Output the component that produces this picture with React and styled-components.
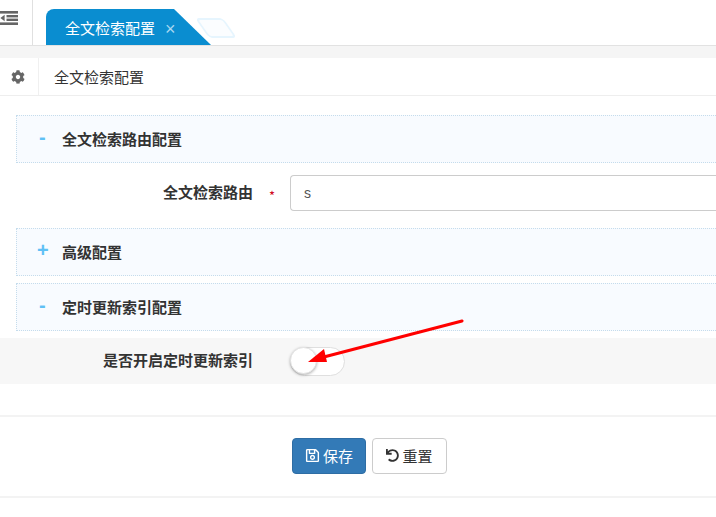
import React from "react";
import styled, { createGlobalStyle } from "styled-components";
import { FaCog, FaRegSave, FaUndo } from "react-icons/fa";

const GlobalStyle = createGlobalStyle`
  html, body {
    margin: 0;
    padding: 0;
    background: #fff;
    overflow: hidden;
  }
  body {
    font-family: "Noto Sans CJK SC", "Liberation Sans", sans-serif;
    font-size: 15px;
    color: #333;
  }
  * {
    box-sizing: border-box;
  }
`;

const SECTION_ICON = { open: "-", closed: "+" };

const App = () => {
  return (
    <Page>
      <GlobalStyle />
      <TopBar>
        <MenuToggle>
          <svg width="18" height="14" viewBox="0 0 18 14" fill="#666">
            <rect x="0" y="0" width="18" height="2.6" />
            <rect x="6.5" y="4" width="11.5" height="2.4" />
            <rect x="6.5" y="7.6" width="11.5" height="2.4" />
            <rect x="0" y="11.4" width="18" height="2.6" />
            <path d="M4.6 3.8v6.4L0.4 7z" />
          </svg>
        </MenuToggle>
        <Tab>
          全文检索配置
          <TabClose>×</TabClose>
        </Tab>
        <GhostTab />
      </TopBar>
      <Band />
      <Breadcrumb>
        <CrumbIcon>
          <FaCog size={14} />
        </CrumbIcon>
        <CrumbText>全文检索配置</CrumbText>
      </Breadcrumb>
      <Content>
        <Section>
          <SectionIcon>{SECTION_ICON.open}</SectionIcon>
          全文检索路由配置
        </Section>
        <FormRow>
          <Label>全文检索路由</Label>
          <Required>*</Required>
          <Input defaultValue="s" />
        </FormRow>
        <Section>
          <SectionIcon $plus>{SECTION_ICON.closed}</SectionIcon>
          高级配置
        </Section>
        <Section $spaced>
          <SectionIcon>{SECTION_ICON.open}</SectionIcon>
          定时更新索引配置
        </Section>
        <SwitchRow>
          <Label>是否开启定时更新索引</Label>
          <Toggle>
            <Knob />
          </Toggle>
        </SwitchRow>
      </Content>
      <Actions>
        <SaveButton>
          <FaRegSave size={15} />
          保存
        </SaveButton>
        <ResetButton>
          <FaUndo size={13} />
          重置
        </ResetButton>
      </Actions>
      <Arrow width="170" height="50" viewBox="0 0 170 50">
        <line x1="160" y1="3" x2="18" y2="40" stroke="#f00" strokeWidth="3" strokeLinecap="round" />
        <path d="M6 44 L22 31 L25 44 Z" fill="#f00" />
      </Arrow>
    </Page>
  );
};

export default App;

const Page = styled.div`
  position: relative;
  width: 716px;
  height: 517px;
  overflow: hidden;
`;

const TopBar = styled.div`
  display: flex;
  align-items: flex-end;
  height: 46px;
  border-bottom: 1px solid #e2e2e2;
`;

const MenuToggle = styled.div`
  display: flex;
  align-items: center;
  width: 33px;
  height: 45px;
  padding: 0 0 10px 0;
  margin-right: 13px;
  border-right: 1px solid #e0e0e0;
  overflow: hidden;
`;

const Tab = styled.div`
  display: flex;
  align-items: center;
  flex-shrink: 0;
  width: 165px;
  height: 36px;
  padding: 0 0 0 19px;
  color: #fff;
  font-size: 15px;
  background: #0a8dd0;
  border-radius: 8px 0 0 0;
  clip-path: polygon(0 0, 128px 0, 165px 36px, 0 36px);
`;

const TabClose = styled.span`
  margin-left: 10px;
  margin-top: 3px;
  font-family: "Liberation Sans", sans-serif;
  font-size: 18px;
  line-height: 1;
  color: #a8d8f0;
`;

const GhostTab = styled.div`
  width: 28px;
  height: 20px;
  margin: 0 0 7px -9px;
  background: #fbfdff;
  border: 2px solid #e6f5fe;
  border-radius: 4px;
  transform: skewX(35deg);
`;

const Band = styled.div`
  height: 12px;
  background: #f5f5f5;
`;

const Breadcrumb = styled.div`
  display: flex;
  align-items: stretch;
  height: 38px;
  border-bottom: 1px solid #eee;
`;

const CrumbIcon = styled.div`
  display: flex;
  align-items: center;
  justify-content: center;
  width: 39px;
  padding-right: 3px;
  color: #666;
  border-right: 1px solid #f0f0f0;
`;

const CrumbText = styled.div`
  display: flex;
  align-items: center;
  padding-left: 15px;
  color: #333;
`;

const Content = styled.div`
  padding-top: 19px;
`;

const Section = styled.div`
  display: flex;
  align-items: center;
  height: 48px;
  margin: ${(props) => (props.$spaced ? "7px" : "0")} 0 0 16px;
  padding-bottom: 2px;
  font-weight: 600;
  color: #333;
  background: #f8fbff;
  border: 1px dotted #c5dcec;
  border-right: none;
`;

const SectionIcon = styled.span`
  width: 45px;
  padding-left: ${(props) => (props.$plus ? "20px" : "22px")};
  margin-top: -2px;
  font-family: "Liberation Sans", sans-serif;
  font-size: 20px;
  font-weight: 700;
  line-height: 1;
  color: #5fc0f5;
`;

const FormRow = styled.div`
  display: flex;
  align-items: center;
  height: 65px;
  padding-bottom: 5px;
`;

const SwitchRow = styled.div`
  display: flex;
  align-items: center;
  height: 46px;
  margin-top: 7px;
  background: #f7f7f7;
`;

const Label = styled.label`
  width: 253px;
  padding-bottom: 4px;
  font-weight: 600;
  text-align: right;
  color: #333;
  flex-shrink: 0;

  ${SwitchRow} & {
    margin-right: 37px;
  }
`;

const Required = styled.span`
  width: 37px;
  padding: 4px 0 0 16px;
  font-size: 13px;
  color: #d0021b;
`;

const Input = styled.input`
  width: 426px;
  height: 36px;
  padding: 0 13px;
  font-family: "Liberation Sans", sans-serif;
  font-size: 14px;
  color: #555;
  background: #fff;
  border: 1px solid #ccc;
  border-right: none;
  border-radius: 4px 0 0 4px;
  outline: none;
`;

const Toggle = styled.div`
  position: relative;
  width: 55px;
  height: 29px;
  background: #fff;
  border: 1px solid #dfdfdf;
  border-radius: 15px;
`;

const Knob = styled.div`
  position: absolute;
  top: -1px;
  left: -1px;
  width: 27px;
  height: 27px;
  background: #fff;
  border: 1px solid #e4e4e4;
  border-radius: 50%;
  box-shadow: 0 1px 3px rgba(0, 0, 0, 0.3);
`;

const Actions = styled.div`
  display: flex;
  justify-content: center;
  align-items: center;
  gap: 6px;
  height: 83px;
  margin-top: 31px;
  padding: 0 0 1px 23px;
  border-top: 2px solid #f3f3f3;
  border-bottom: 2px solid #f3f3f3;
`;

const BaseButton = styled.button`
  display: flex;
  align-items: center;
  justify-content: center;
  gap: 3px;
  width: 74px;
  height: 36px;
  padding: 0 0 2px;
  font-family: inherit;
  font-size: 15px;
  border-radius: 4px;
`;

const SaveButton = styled(BaseButton)`
  color: #fff;
  background: #337ab7;
  border: 1px solid #2e6da4;
`;

const ResetButton = styled(BaseButton)`
  width: 75px;
  color: #333;
  background: #fff;
  border: 1px solid #ccc;
`;

const Arrow = styled.svg`
  position: absolute;
  top: 318px;
  left: 302px;
`;
